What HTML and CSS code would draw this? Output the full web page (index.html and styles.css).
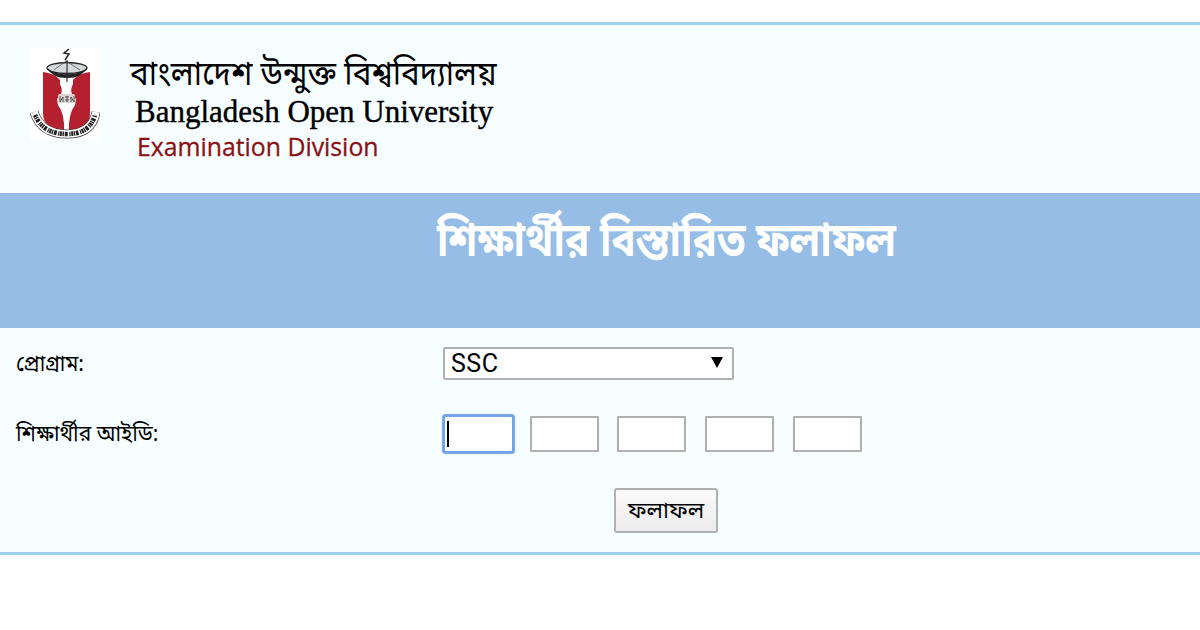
FILE: index.html
```html
<!DOCTYPE html>
<html lang="bn">
<head>
    <meta charset="UTF-8">
    <meta name="viewport" content="width=device-width, initial-scale=1.0">
    <title>Bangladesh Open University</title>
    <link rel="stylesheet" href="styles.css">
</head>
<body>

<div class="container">
    <div class="header">
        <svg class="logo" width="70" height="92" viewBox="0 0 70 92">
            <rect width="70" height="92" fill="#fff"/>
            <path d="M13 24 Q24 25 30 32 V36 Q35 45 27 51 L28 57 Q35 66 34 84 Q13 81 13 65 Z" fill="#b5202f"/>
            <path d="M60 24 Q49 25 43 32 V36 Q38 45 46 51 L45 57 Q38 66 39 84 Q60 81 60 65 Z" fill="#b5202f"/>
            <ellipse cx="37" cy="20" rx="20" ry="5.5" fill="#d6d9d9" stroke="#222" stroke-width="1.3"/>
            <path d="M17 20 Q22 30 37 30 Q52 30 57 20 Q48 27 37 26 Q26 27 17 20 Z" fill="#222"/>
            <path d="M24 22 L36 13 L50 22" fill="none" stroke="#555" stroke-width=".8"/>
            <path d="M37 12 V34" fill="none" stroke="#333" stroke-width="1.2"/>
            <path d="M39 1 L34 5 L39 6 L35 12" fill="none" stroke="#222" stroke-width="1.5"/>
            <rect x="28" y="46" width="17" height="9" rx="2" fill="#ddd2d2"/>
            <path d="M30 48 V54 L33 49 V54 M35 49 H39 M35 52 H39 M37 48 V54 M41 54 V49 L44 54 V48" fill="none" stroke="#555" stroke-width="1"/>
            <path d="M4 64 Q11 86 37 86 Q62 86 66 64" fill="none" stroke="#333" stroke-width="9"/>
            <path d="M4 64 Q11 86 37 86 Q62 86 66 64" fill="none" stroke="#fff" stroke-width="7.6"/>
            <path d="M5 67 Q13 86 37 86 Q60 86 65 67" fill="none" stroke="#222" stroke-width="4.6" stroke-dasharray="2 .6 1.4 .8 2.8 1.5 1.2 .6"/>
        </svg>
        <div class="title">
            <div class="name-bn">বাংলাদেশ উন্মুক্ত বিশ্ববিদ্যালয়</div>
            <div class="name-en">Bangladesh Open University</div>
            <div class="division">Examination Division</div>
        </div>
    </div>

    <div class="banner">
        <h1>শিক্ষার্থীর বিস্তারিত ফলাফল</h1>
    </div>

    <form class="form">
        <div class="row row-program">
            <label class="label" for="program">প্রোগ্রাম:</label>
            <div class="select-box">
                <select id="program" class="select">
                    <option>SSC</option>
                </select>
                <svg class="arrow" width="12" height="11" viewBox="0 0 12 11"><path d="M0 0 H12 L6 11 Z"/></svg>
            </div>
        </div>
        <div class="row row-id">
            <label class="label label-id">শিক্ষার্থীর আইডি:</label>
            <div class="id-boxes">
                <div class="id-box active"><span class="caret"></span></div>
                <input class="id-box" type="text">
                <input class="id-box" type="text">
                <input class="id-box" type="text">
                <input class="id-box" type="text">
            </div>
        </div>
        <button type="button" class="submit">ফলাফল</button>
    </form>
</div>

</body>
</html>
```
FILE: styles.css
```css
* {
    box-sizing: border-box;
}
body {
    margin: 0;
    padding-top: 22px;
    background-color: #fff;
    font-family: "Noto Sans Bengali", "Noto Sans", sans-serif;
    color: #000;
}
.container {
    height: 533px;
    background-color: #f6feff;
    border-top: 3px solid #a0d0ef;
    border-bottom: 3px solid #a0d0ef;
}
.header {
    display: flex;
    height: 168px;
    padding: 23px 0 0 30px;
}
.title {
    padding-left: 30px;
    white-space: nowrap;
}
.name-bn {
    height: 46px;
    line-height: 58px;
    font-size: 34px;
    transform: scaleX(0.924);
    transform-origin: left;
}
.name-en {
    height: 36px;
    padding-left: 5px;
    line-height: 36px;
    font-family: "Liberation Serif", serif;
    font-size: 31px;
    -webkit-text-stroke: 0.4px #000;
}
.division {
    padding-left: 7px;
    line-height: 33px;
    font-family: "Open Sans", sans-serif;
    font-size: 24.8px;
    color: #8b1014;
    -webkit-text-stroke: 0.3px #8b1014;
}
.banner {
    height: 135px;
    padding-left: 437px;
    background-color: #95bde6;
}
.banner h1 {
    margin: 0;
    line-height: 102px;
    font-size: 47px;
    font-weight: bold;
    color: #fff;
    white-space: nowrap;
    transform: scaleX(0.863);
    transform-origin: left;
}
.form {
    padding-top: 19px;
}
.row {
    display: flex;
    padding-left: 16px;
}
.row-program {
    height: 68px;
}
.row-id {
    height: 73px;
}
.label {
    width: 427px;
    line-height: 37px;
    font-size: 22px;
    white-space: nowrap;
    transform: scaleX(0.955);
    transform-origin: left;
}
.label-id {
    line-height: 41px;
}
.select-box {
    position: relative;
    width: 291px;
    height: 33px;
}
.select {
    width: 100%;
    height: 100%;
    padding: 0 6px;
    appearance: none;
    background-color: #fff;
    border: 2px solid #b0b0b0;
    border-radius: 2px;
    font-family: Roboto, sans-serif;
    font-size: 25px;
    letter-spacing: 0.5px;
    color: #000;
}
.arrow {
    position: absolute;
    top: 10px;
    right: 11px;
}
.id-boxes {
    display: flex;
    align-items: center;
    gap: 18.7px;
    height: 38px;
}
.id-box {
    width: 69px;
    height: 36px;
    padding: 0;
    background-color: #fff;
    border: 2px solid #b0b0b0;
    border-radius: 1px;
}
.active {
    width: 71px;
    height: 38px;
    margin-right: -3px;
    padding: 4px 2px;
    border: 2px solid #75a2e8;
    border-radius: 3px;
    box-shadow: 0 0 1px 0.5px #75a2e8;
}
.caret {
    display: block;
    width: 2px;
    height: 26px;
    background-color: #000;
}
.submit {
    display: block;
    width: 104px;
    height: 45px;
    margin-left: 614px;
    padding: 2px 0 0;
    background: linear-gradient(#fafafa, #ececec);
    border: 2px solid #b0b0b0;
    border-radius: 3px;
    font-family: "Noto Sans Bengali", "Noto Sans", sans-serif;
    font-size: 22.5px;
    color: #000;
}
```
